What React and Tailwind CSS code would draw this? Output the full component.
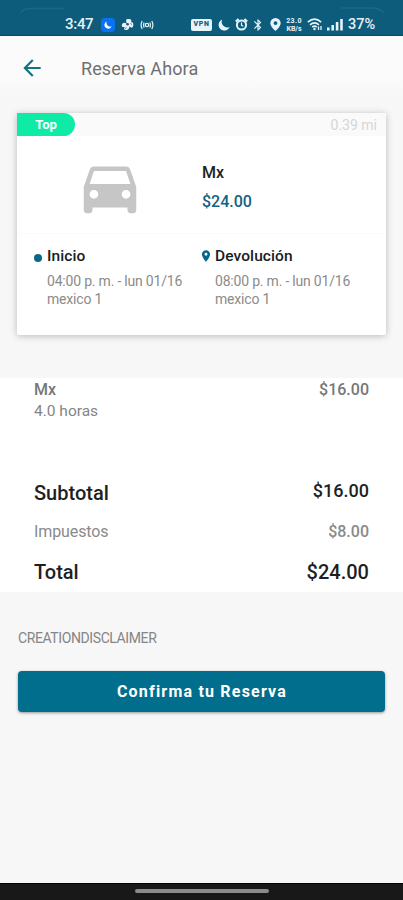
import React from 'react';
import { MdArrowBack, MdDirectionsCar, MdBluetooth, MdLocationOn } from 'react-icons/md';

const TRIP = [
  { title: 'Inicio', time: '04:00 p. m. - lun 01/16', place: 'mexico 1' },
  { title: 'Devolución', time: '08:00 p. m. - lun 01/16', place: 'mexico 1', pin: true },
];

const Moon = ({ className }) => (
  <svg viewBox="0 0 12 12" className={className} fill="currentColor">
    <path d="M4.2 0.6A5.7 5.7 0 1 0 11.6 8A5.600 5.600 0 0 1 4.2 0.6Z" />
  </svg>
);

const StatusBar = () => (
  <div className="relative flex h-9 shrink-0 items-end border-b border-[#0a4b69] bg-[#0e5c7c] pr-[27px] pb-[2px] pl-[65px] text-[#e6f3f8]">
    {/* faint reflections on the rounded corners */}
    <svg viewBox="0 0 403 20" className="absolute top-0 left-0 h-5 w-[403px]" fill="none" stroke="#1b6886" strokeWidth="1.5">
      <path d="M21 13Q23 8.500 30 8.500H64" />
      <path d="M341 8H370Q380 8 384 13" />
    </svg>
    <div className="flex h-[17px] w-full items-center justify-between">
      <div className="flex items-center">
        <span className="w-9 text-[15px] leading-[17px] font-medium tracking-[-0.3px]">3:47</span>
        <span className="flex h-[14px] w-[14px] items-center justify-center rounded-[4px] bg-[#0873f2]">
          <Moon className="h-2 w-2 text-white" />
        </span>
        <svg viewBox="0 0 13 13" className="ml-[6px] h-[13px] w-[13px]" fill="currentColor">
          <path d="M6 6Q3.500 0.500 7.500 1Q11.500 1 10 4Q13 4 12.200 8Q11.500 11 8.500 8.500Q8 12.500 4.500 12Q2 11.500 3.500 9Q0 9.500 1 6.500Q2 3.500 6 6Z" />
          <circle cx="6.600" cy="6.200" r="1.300" fill="#0e5c7c" />
          <path d="M5.500 9.500L3.500 11M9.500 5.500L11 6.500" stroke="#0e5c7c" strokeWidth="0.8" />
        </svg>
        <svg viewBox="0 0 14 12" className="ml-[6px] h-3 w-[14px]" fill="none" stroke="currentColor" strokeWidth="1.2">
          <circle cx="7" cy="6" r="1.700" />
          <path d="M4.200 3.500Q3 6 4.200 8.500M2.200 2Q0 6 2.200 10M9.800 3.500Q11 6 9.800 8.500M11.800 2Q14 6 11.800 10" />
        </svg>
      </div>
      <div className="flex items-center">
        <span className="flex h-3 w-[21px] items-center justify-center rounded-[2px] bg-current">
          <span className="text-[7px] leading-none font-black tracking-[0.6px] text-[#245f76]">VPN</span>
        </span>
        <Moon className="ml-[6px] h-3 w-3" />
        <svg viewBox="0 0 13 13" className="ml-[5px] h-[13px] w-[13px]" fill="none" stroke="currentColor" strokeWidth="2">
          <circle cx="6.500" cy="7" r="4.600" />
          <path d="M0.800 3.600L3.600 1M12.200 3.600L9.400 1" />
          <path d="M6.500 4.500V7.300L8.300 8.300" strokeWidth="1.2" />
        </svg>
        <MdBluetooth className="ml-[3px] h-[14px] w-[14px]" />
        <svg viewBox="0 0 11 13" className="ml-[5px] h-[13px] w-[11px]" fill="currentColor">
          <path fillRule="evenodd" d="M5.500 0A5.200 5.200 0 0 0 0.300 5.200C0.300 8.500 5.500 13 5.500 13S10.700 8.500 10.700 5.200A5.200 5.200 0 0 0 5.500 0ZM5.500 3.200A1.900 1.900 0 1 1 5.500 7A1.900 1.900 0 0 1 5.500 3.200Z" />
        </svg>
        <span className="ml-[4px] flex w-[18px] flex-col items-center text-[7px] leading-[8px] font-bold">
          <span className="tracking-[0.4px]">23.0</span>
          <span>KB/s</span>
        </span>
        <svg viewBox="0 0 16 13" className="ml-[4px] h-[13px] w-4" fill="none" stroke="currentColor" strokeWidth="1.6">
          <path d="M0.800 4.200Q7.500 -1.800 14.200 4.200M3 6.800Q7.500 3 12 6.800M5.200 9.200Q7.500 7.200 9.800 9.200" />
          <circle cx="7.500" cy="11" r="1.200" fill="currentColor" stroke="none" />
          <path d="M11.500 12V8.500M14 8V12" strokeWidth="1.3" />
        </svg>
        <svg viewBox="0 0 16 13" className="ml-[4px] h-[13px] w-4" fill="currentColor">
          <path d="M0 9.500h2.600V12.500H0ZM4.400 7h2.600V12.500H4.400ZM8.800 4h2.600V12.500H8.800ZM13.200 1h2.600V12.500h-2.600Z" />
        </svg>
        <span className="ml-[5px] w-7 text-[14.5px] leading-[17px] font-medium">37%</span>
      </div>
    </div>
  </div>
);

const TripPoint = ({ title, time, place, pin }) => (
  <div className="flex w-[168px]">
    <div className="flex h-5 w-[13px] shrink-0 items-center">
      {pin ? (
        <MdLocationOn className="-ml-[3px] h-[14px] w-[14px] shrink-0 text-[#086788]" />
      ) : (
        <span className="mt-[3px] h-2 w-2 rounded-full bg-[#086788]" />
      )}
    </div>
    <div className="whitespace-nowrap">
      <div className="text-[15.5px] leading-5 font-medium tracking-[0.1px] text-[#18201f]">{title}</div>
      <div className="mt-[6px] text-[14px] leading-[18px] tracking-[-0.2px] text-[#8b8b8b]">
        <div>{time}</div>
        <div>{place}</div>
      </div>
    </div>
  </div>
);

const CarCard = () => (
  <div className="mx-[17px] mt-[13px] h-[222px] rounded-[2px] bg-white shadow-[0_1px_7px_rgba(0,0,0,0.25)]">
    <div className="flex h-[23px] items-center justify-between bg-[#fafafa] pr-[9px]">
      <span className="flex h-full w-[58px] items-center justify-center rounded-r-full bg-[#0eeba6] text-[13px] font-bold text-white">Top</span>
      <span className="pt-px text-[14px] text-[#d6d6d6]">0.39 mi</span>
    </div>
    <div className="flex h-[98px] border-b border-[#fbfbfb]">
      <div className="flex w-[185px] justify-center pt-4">
        <MdDirectionsCar className="h-[70px] w-[70px] text-[#c6c6c6]" />
      </div>
      <div className="pt-[27px] text-[16px] leading-5 font-medium">
        <div className="text-[#1c2424]">Mx</div>
        <div className="mt-[9px] text-[#126284]">$24.00</div>
      </div>
    </div>
    <div className="flex pt-[12px] pl-[17px]">
      {TRIP.map((point) => (
        <TripPoint key={point.title} {...point} />
      ))}
    </div>
  </div>
);

const Summary = () => (
  <div className="mt-[43px] h-[214px] bg-white px-[34px] pt-[2px]">
    <div className="flex justify-between text-[16px] leading-5 font-medium text-[#777777]">
      <span>Mx</span>
      <span>$16.00</span>
    </div>
    <div className="mt-px text-[15.5px] leading-5 text-[#858585]">4.0 horas</div>
    <div className="mt-[59px] flex h-6 justify-between font-medium text-[#1f1f1f]">
      <span className="text-[20px] leading-[26px]">Subtotal</span>
      <span className="text-[18px] leading-[22px]">$16.00</span>
    </div>
    <div className="mt-[18px] flex justify-between text-[16px] leading-5 text-[#8a8a8a]">
      <span className="tracking-[-0.1px]">Impuestos</span>
      <span className="font-medium">$8.00</span>
    </div>
    <div className="mt-[18px] flex justify-between text-[20px] leading-6 font-medium text-[#1f1f1f]">
      <span>Total</span>
      <span>$24.00</span>
    </div>
  </div>
);

export default function App() {
  return (
    <div className="flex h-[900px] w-[403px] flex-col overflow-hidden bg-[#f7f7f7] font-['Roboto',sans-serif]">
      <StatusBar />
      <header className="flex h-16 shrink-0 items-center bg-linear-to-b from-[#fbfbfb] from-60% to-[#f7f7f7] pl-[19px]">
        <MdArrowBack className="h-[26px] w-[26px] text-[#167384]" />
        <h1 className="ml-9 pt-px text-[18px] tracking-[0.1px] text-[#707070]">Reserva Ahora</h1>
      </header>
      <main className="flex-1">
        <CarCard />
        <Summary />
        <p className="mt-9 pl-[18px] text-[14px] leading-5 tracking-[-0.4px] text-[#858585]">CREATIONDISCLAIMER</p>
        <div className="px-[18px] pt-[23px]">
          <button className="h-[41px] w-full rounded-[4px] bg-[#006e8c] pl-px text-[16px] font-bold tracking-[1.2px] text-white shadow-[0_1px_3px_rgba(0,0,0,0.4)]">
            Confirma tu Reserva
          </button>
        </div>
      </main>
      <div className="flex h-[17px] shrink-0 justify-center border-t border-black bg-[#181818] pt-[5px]">
        <div className="h-1 w-[134px] rounded-full bg-[#8b8b8b]" />
      </div>
    </div>
  );
}
